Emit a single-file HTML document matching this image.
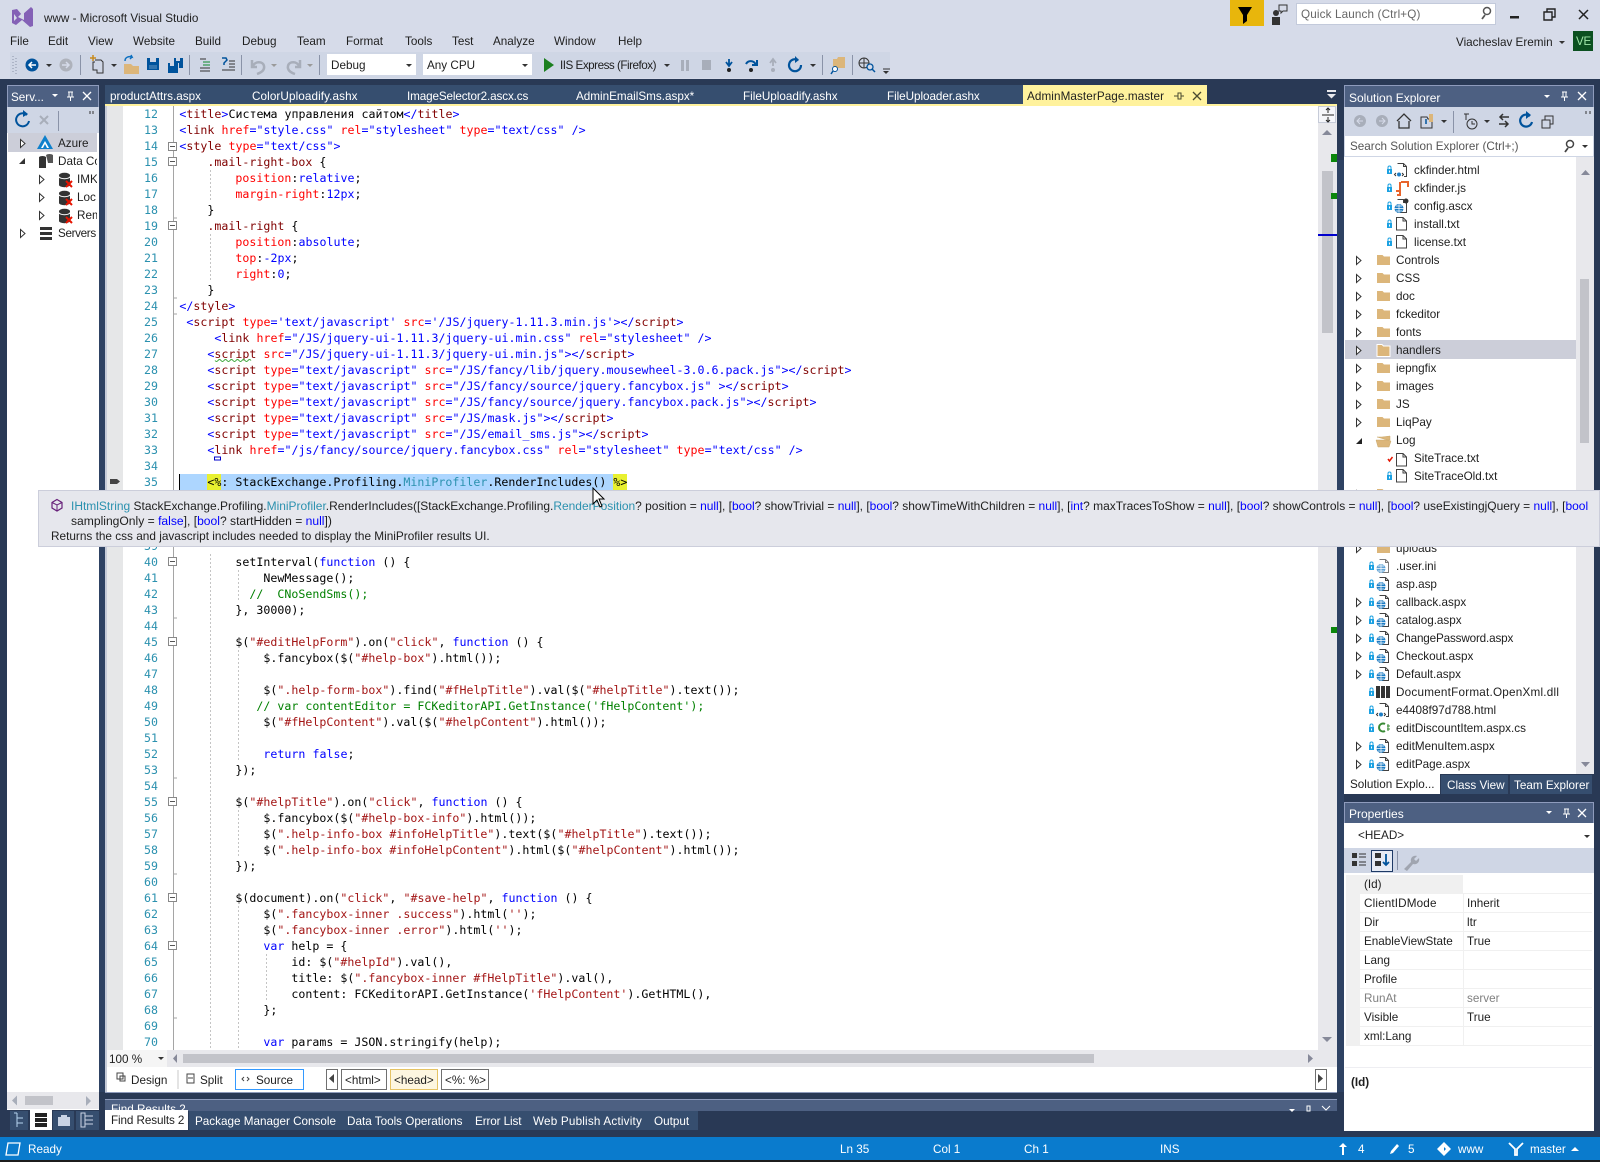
<!DOCTYPE html>
<html><head><meta charset="utf-8"><title>www - Microsoft Visual Studio</title>
<style>
html,body{margin:0;padding:0;width:1600px;height:1162px;overflow:hidden;background:#293955}
body{position:relative;font:11.7px/16px "Liberation Sans",sans-serif;color:#1e1e1e}
.r0{position:absolute}
.x{position:absolute;white-space:pre;line-height:16px;margin-top:1px}
.w{color:#fff}
.l{position:absolute;left:179.4px;margin:0;white-space:pre;font:11.6px/16px "DejaVu Sans Mono","Liberation Mono",monospace;letter-spacing:.02px;color:#000}
.n{position:absolute;left:125px;width:33px;text-align:right;font:11.6px/16px "DejaVu Sans Mono",monospace;color:#2b91af}
i{font-style:normal}
i.b{color:#00f}i.m{color:#800000}i.r{color:#f00}i.s{color:#a31515}i.g{color:#008000}i.t{color:#2b91af}
</style></head><body>
<!-- chrome -->
<div class="r0" style="left:0;top:0;width:1600px;height:79px;background:#d6dbe9"></div>
<div class="r0" style="left:10px;top:52px;width:880px;height:26px;background:#cfd6e5"></div>
<div class="r0" style="left:1230px;top:0;width:34px;height:26px;background:#e8b60c"></div>
<div class="r0" style="left:1296px;top:3px;width:198px;height:20px;background:#fff;border:1px solid #c3cadb"></div>
<div class="r0" style="left:1573px;top:31px;width:20px;height:20px;background:#0b5020"></div>
<div class="r0" style="left:327px;top:54px;width:89px;height:21px;background:#fff"></div>
<div class="r0" style="left:423px;top:54px;width:109px;height:21px;background:#fff"></div>
<div class="r0" style="left:99px;top:160px;width:6px;height:932px;background:#2e4263"></div>
<div class="r0" style="left:1337px;top:160px;width:7px;height:932px;background:#2e4263"></div>

<span class="x" style="left:44px;top:10px">www - Microsoft Visual Studio</span>
<span class="x" style="left:10px;top:33px">File</span><span class="x" style="left:48px;top:33px">Edit</span><span class="x" style="left:88px;top:33px">View</span><span class="x" style="left:133px;top:33px">Website</span><span class="x" style="left:195px;top:33px">Build</span><span class="x" style="left:242px;top:33px">Debug</span><span class="x" style="left:297px;top:33px">Team</span><span class="x" style="left:346px;top:33px">Format</span><span class="x" style="left:405px;top:33px">Tools</span><span class="x" style="left:452px;top:33px">Test</span><span class="x" style="left:493px;top:33px">Analyze</span><span class="x" style="left:554px;top:33px">Window</span><span class="x" style="left:618px;top:33px">Help</span>
<span class="x" style="left:331px;top:57px">Debug</span><span class="x" style="left:427px;top:57px">Any CPU</span><span class="x" style="left:560px;top:57px;letter-spacing:-.5px">IIS Express (Firefox)</span>
<span class="x" style="left:1301px;top:6px;color:#666;letter-spacing:.14px">Quick Launch (Ctrl+Q)</span>
<span class="x" style="left:1456px;top:34px">Viacheslav Eremin</span>
<span class="x" style="left:1576px;top:33px;color:#9fe6a8;font-size:11.5px;letter-spacing:-.2px">VE</span>

<!-- left panel -->
<div class="r0" style="left:7px;top:85px;width:90px;height:21px;background:#4d6082;border:1px solid #8e9bbc;border-bottom:0"></div>
<div class="r0" style="left:7px;top:107px;width:92px;height:26px;background:#cfd6e5"></div>
<div class="r0" style="left:7px;top:133px;width:92px;height:977px;background:#fff"></div>
<div class="r0" style="left:8px;top:133px;width:89px;height:19px;background:#ccced9"></div>
<div class="r0" style="left:7px;top:1092px;width:92px;height:17px;background:#e8e8ec"></div>
<div class="r0" style="left:25px;top:1096px;width:28px;height:9px;background:#c2c3c9"></div>
<span class="x w" style="left:11px;top:89px">Serv...</span>
<span class="x" style="left:58px;top:135px">Azure</span>
<span class="x" style="left:58px;top:153px;width:39px;overflow:hidden">Data Connections</span>
<span class="x" style="left:77px;top:171px;width:20px;overflow:hidden">IMKdb</span>
<span class="x" style="left:77px;top:189px;width:19px;overflow:hidden">Local</span>
<span class="x" style="left:77px;top:207px;width:20px;overflow:hidden">Remote</span>
<span class="x" style="left:58px;top:225px;width:40px;overflow:hidden;letter-spacing:-.35px">Servers</span>
<div class="r0" style="left:10px;top:1111px;width:18px;height:19px;background:#364e6f"></div>
<div class="r0" style="left:30px;top:1110px;width:22px;height:20px;background:#fff"></div>
<div class="r0" style="left:53px;top:1111px;width:21px;height:19px;background:#364e6f"></div>
<div class="r0" style="left:76px;top:1111px;width:23px;height:19px;background:#364e6f"></div>

<!-- tabs -->
<div class="r0" style="left:105px;top:85px;width:919px;height:19px;background:#364e6f"></div>
<div class="r0" style="left:1023px;top:85px;width:184px;height:20px;background:#fff29d"></div>
<div class="r0" style="left:105px;top:104px;width:1232px;height:2px;background:#fff29d"></div>
<span class="x w" style="left:110px;top:88px">productAttrs.aspx</span><span class="x w" style="left:252px;top:88px;letter-spacing:.1px">ColorUploadify.ashx</span><span class="x w" style="left:407px;top:88px;letter-spacing:-.13px">ImageSelector2.ascx.cs</span><span class="x w" style="left:576px;top:88px">AdminEmailSms.aspx*</span><span class="x w" style="left:743px;top:88px">FileUploadify.ashx</span><span class="x w" style="left:887px;top:88px;letter-spacing:-.05px">FileUploader.ashx</span>
<span class="x" style="left:1027px;top:88px;letter-spacing:.09px">AdminMasterPage.master</span>

<!-- editor -->
<div class="r0" style="left:105px;top:106px;width:1232px;height:986px;background:#fff"></div>
<div class="r0" style="left:105px;top:106px;width:2px;height:986px;background:#c6cbd8"></div>
<div class="r0" style="left:107px;top:106px;width:16px;height:944px;background:#e6e7e8"></div>
<div class="r0" style="left:1318px;top:106px;width:19px;height:944px;background:#e8e8ec"></div>
<div class="r0" style="left:1318px;top:106px;width:18px;height:17px;background:#f5f6fa;border:1px solid #c6cbd8;box-sizing:border-box"></div>
<div class="r0" style="left:1322px;top:171px;width:11px;height:162px;background:#c2c3c9"></div>
<div class="r0" style="left:1331px;top:154px;width:6px;height:8px;background:#0b860b"></div>
<div class="r0" style="left:1331px;top:193px;width:6px;height:6px;background:#0b860b"></div>
<div class="r0" style="left:1331px;top:627px;width:6px;height:6px;background:#0b860b"></div>
<div class="r0" style="left:1318px;top:234px;width:19px;height:2px;background:#0000cd"></div>
<div class="r0" style="left:107px;top:1050px;width:1230px;height:17px;background:#e8e8ec"></div>
<div class="r0" style="left:107px;top:1050px;width:60px;height:17px;background:#f5f5f5"></div>
<div class="r0" style="left:183px;top:1054px;width:911px;height:9px;background:#c2c3c9"></div>
<span class="x" style="left:109px;top:1051px">100 %</span>
<div class="r0" style="left:105px;top:1092px;width:1232px;height:1px;background:#8e9bbc"></div>
<div class="r0" style="left:235px;top:1069px;width:67px;height:19px;border:1px solid #3399ff"></div>
<div class="r0" style="left:326px;top:1069px;width:10px;height:19px;border:1px solid #707070"></div>
<div class="r0" style="left:341px;top:1069px;width:44px;height:19px;border:1px solid #707070"></div>
<div class="r0" style="left:390px;top:1069px;width:46px;height:19px;border:1px solid #e5c365;background:#fdf6e0"></div>
<div class="r0" style="left:441px;top:1069px;width:46px;height:19px;border:1px solid #707070"></div>
<div class="r0" style="left:1315px;top:1069px;width:10px;height:19px;border:1px solid #707070"></div>
<span class="x" style="left:131px;top:1072px">Design</span><span class="x" style="left:200px;top:1072px">Split</span><span class="x" style="left:256px;top:1072px">Source</span>
<span class="x" style="left:345px;top:1072px">&lt;html&gt;</span><span class="x" style="left:394px;top:1072px">&lt;head&gt;</span><span class="x" style="left:445px;top:1072px">&lt;%: %&gt;</span>

<!-- line numbers -->
<span class="n" style="top:106px">12</span><span class="n" style="top:122px">13</span><span class="n" style="top:138px">14</span><span class="n" style="top:154px">15</span><span class="n" style="top:170px">16</span><span class="n" style="top:186px">17</span><span class="n" style="top:202px">18</span><span class="n" style="top:218px">19</span><span class="n" style="top:234px">20</span><span class="n" style="top:250px">21</span><span class="n" style="top:266px">22</span><span class="n" style="top:282px">23</span><span class="n" style="top:298px">24</span><span class="n" style="top:314px">25</span><span class="n" style="top:330px">26</span><span class="n" style="top:346px">27</span><span class="n" style="top:362px">28</span><span class="n" style="top:378px">29</span><span class="n" style="top:394px">30</span><span class="n" style="top:410px">31</span><span class="n" style="top:426px">32</span><span class="n" style="top:442px">33</span><span class="n" style="top:458px">34</span><span class="n" style="top:474px">35</span><span class="n" style="top:538px">39</span><span class="n" style="top:554px">40</span><span class="n" style="top:570px">41</span><span class="n" style="top:586px">42</span><span class="n" style="top:602px">43</span><span class="n" style="top:618px">44</span><span class="n" style="top:634px">45</span><span class="n" style="top:650px">46</span><span class="n" style="top:666px">47</span><span class="n" style="top:682px">48</span><span class="n" style="top:698px">49</span><span class="n" style="top:714px">50</span><span class="n" style="top:730px">51</span><span class="n" style="top:746px">52</span><span class="n" style="top:762px">53</span><span class="n" style="top:778px">54</span><span class="n" style="top:794px">55</span><span class="n" style="top:810px">56</span><span class="n" style="top:826px">57</span><span class="n" style="top:842px">58</span><span class="n" style="top:858px">59</span><span class="n" style="top:874px">60</span><span class="n" style="top:890px">61</span><span class="n" style="top:906px">62</span><span class="n" style="top:922px">63</span><span class="n" style="top:938px">64</span><span class="n" style="top:954px">65</span><span class="n" style="top:970px">66</span><span class="n" style="top:986px">67</span><span class="n" style="top:1002px">68</span><span class="n" style="top:1018px">69</span><span class="n" style="top:1034px">70</span>

<!-- line 35 highlight -->
<div class="r0" style="left:180px;top:474px;width:447px;height:16px;background:#add6ff"></div>
<div class="r0" style="left:207px;top:474px;width:14px;height:16px;background:#e8f030"></div>
<div class="r0" style="left:613px;top:474px;width:14px;height:16px;background:#e8f030"></div>
<div class="r0" style="left:179px;top:474px;width:1px;height:16px;background:#000"></div>

<!-- code -->
<pre class="l" style="top:106px"><i class="b">&lt;</i><i class="m">title</i><i class="b">&gt;</i>Система управления сайтом<i class="b">&lt;/</i><i class="m">title</i><i class="b">&gt;</i></pre>
<pre class="l" style="top:122px"><i class="b">&lt;</i><i class="m">link</i> <i class="r">href</i><i class="b">="style.css"</i> <i class="r">rel</i><i class="b">="stylesheet"</i> <i class="r">type</i><i class="b">="text/css"</i> <i class="b">/&gt;</i></pre>
<pre class="l" style="top:138px"><i class="b">&lt;</i><i class="m">style</i> <i class="r">type</i><i class="b">="text/css"&gt;</i></pre>
<pre class="l" style="top:154px">    <i class="m">.mail-right-box</i> {</pre>
<pre class="l" style="top:170px">        <i class="r">position</i>:<i class="b">relative</i>;</pre>
<pre class="l" style="top:186px">        <i class="r">margin-right</i>:<i class="b">12px</i>;</pre>
<pre class="l" style="top:202px">    }</pre>
<pre class="l" style="top:218px">    <i class="m">.mail-right</i> {</pre>
<pre class="l" style="top:234px">        <i class="r">position</i>:<i class="b">absolute</i>;</pre>
<pre class="l" style="top:250px">        <i class="r">top</i>:<i class="b">-2px</i>;</pre>
<pre class="l" style="top:266px">        <i class="r">right</i>:<i class="b">0</i>;</pre>
<pre class="l" style="top:282px">    }</pre>
<pre class="l" style="top:298px"><i class="b">&lt;/</i><i class="m">style</i><i class="b">&gt;</i></pre>
<pre class="l" style="top:314px"> <i class="b">&lt;</i><i class="m">script</i> <i class="r">type</i><i class="b">='text/javascript'</i> <i class="r">src</i><i class="b">='/JS/jquery-1.11.3.min.js'&gt;&lt;/</i><i class="m">script</i><i class="b">&gt;</i></pre>
<pre class="l" style="top:330px">     <i class="b">&lt;</i><i class="m">link</i> <i class="r">href</i><i class="b">="/JS/jquery-ui-1.11.3/jquery-ui.min.css"</i> <i class="r">rel</i><i class="b">="stylesheet"</i> <i class="b">/&gt;</i></pre>
<pre class="l" style="top:346px">    <i class="b">&lt;</i><i class="m">script</i> <i class="r">src</i><i class="b">="/JS/jquery-ui-1.11.3/jquery-ui.min.js"&gt;&lt;/</i><i class="m">script</i><i class="b">&gt;</i></pre>
<pre class="l" style="top:362px">    <i class="b">&lt;</i><i class="m">script</i> <i class="r">type</i><i class="b">="text/javascript"</i> <i class="r">src</i><i class="b">="/JS/fancy/lib/jquery.mousewheel-3.0.6.pack.js"&gt;&lt;/</i><i class="m">script</i><i class="b">&gt;</i></pre>
<pre class="l" style="top:378px">    <i class="b">&lt;</i><i class="m">script</i> <i class="r">type</i><i class="b">="text/javascript"</i> <i class="r">src</i><i class="b">="/JS/fancy/source/jquery.fancybox.js"</i> <i class="b">&gt;&lt;/</i><i class="m">script</i><i class="b">&gt;</i></pre>
<pre class="l" style="top:394px">    <i class="b">&lt;</i><i class="m">script</i> <i class="r">type</i><i class="b">="text/javascript"</i> <i class="r">src</i><i class="b">="/JS/fancy/source/jquery.fancybox.pack.js"&gt;&lt;/</i><i class="m">script</i><i class="b">&gt;</i></pre>
<pre class="l" style="top:410px">    <i class="b">&lt;</i><i class="m">script</i> <i class="r">type</i><i class="b">="text/javascript"</i> <i class="r">src</i><i class="b">="/JS/mask.js"&gt;&lt;/</i><i class="m">script</i><i class="b">&gt;</i></pre>
<pre class="l" style="top:426px">    <i class="b">&lt;</i><i class="m">script</i> <i class="r">type</i><i class="b">="text/javascript"</i> <i class="r">src</i><i class="b">="/JS/email_sms.js"&gt;&lt;/</i><i class="m">script</i><i class="b">&gt;</i></pre>
<pre class="l" style="top:442px">    <i class="b">&lt;</i><i class="m">link</i> <i class="r">href</i><i class="b">="/js/fancy/source/jquery.fancybox.css"</i> <i class="r">rel</i><i class="b">="stylesheet"</i> <i class="r">type</i><i class="b">="text/css"</i> <i class="b">/&gt;</i></pre>
<pre class="l" style="top:474px">    &lt;%: StackExchange.Profiling.<i class="t">MiniProfiler</i>.RenderIncludes() %&gt;</pre>
<pre class="l" style="top:554px">        setInterval(<i class="b">function</i> () {</pre>
<pre class="l" style="top:570px">            NewMessage();</pre>
<pre class="l" style="top:586px">          <i class="g">//  CNoSendSms();</i></pre>
<pre class="l" style="top:602px">        }, 30000);</pre>
<pre class="l" style="top:634px">        $(<i class="s">"#editHelpForm"</i>).on(<i class="s">"click"</i>, <i class="b">function</i> () {</pre>
<pre class="l" style="top:650px">            $.fancybox($(<i class="s">"#help-box"</i>).html());</pre>
<pre class="l" style="top:682px">            $(<i class="s">".help-form-box"</i>).find(<i class="s">"#fHelpTitle"</i>).val($(<i class="s">"#helpTitle"</i>).text());</pre>
<pre class="l" style="top:698px">           <i class="g">// var contentEditor = FCKeditorAPI.GetInstance('fHelpContent');</i></pre>
<pre class="l" style="top:714px">            $(<i class="s">"#fHelpContent"</i>).val($(<i class="s">"#helpContent"</i>).html());</pre>
<pre class="l" style="top:746px">            <i class="b">return</i> <i class="b">false</i>;</pre>
<pre class="l" style="top:762px">        });</pre>
<pre class="l" style="top:794px">        $(<i class="s">"#helpTitle"</i>).on(<i class="s">"click"</i>, <i class="b">function</i> () {</pre>
<pre class="l" style="top:810px">            $.fancybox($(<i class="s">"#help-box-info"</i>).html());</pre>
<pre class="l" style="top:826px">            $(<i class="s">".help-info-box #infoHelpTitle"</i>).text($(<i class="s">"#helpTitle"</i>).text());</pre>
<pre class="l" style="top:842px">            $(<i class="s">".help-info-box #infoHelpContent"</i>).html($(<i class="s">"#helpContent"</i>).html());</pre>
<pre class="l" style="top:858px">        });</pre>
<pre class="l" style="top:890px">        $(document).on(<i class="s">"click"</i>, <i class="s">"#save-help"</i>, <i class="b">function</i> () {</pre>
<pre class="l" style="top:906px">            $(<i class="s">".fancybox-inner .success"</i>).html(<i class="s">''</i>);</pre>
<pre class="l" style="top:922px">            $(<i class="s">".fancybox-inner .error"</i>).html(<i class="s">''</i>);</pre>
<pre class="l" style="top:938px">            <i class="b">var</i> help = {</pre>
<pre class="l" style="top:954px">                id: $(<i class="s">"#helpId"</i>).val(),</pre>
<pre class="l" style="top:970px">                title: $(<i class="s">".fancybox-inner #fHelpTitle"</i>).val(),</pre>
<pre class="l" style="top:986px">                content: FCKeditorAPI.GetInstance(<i class="s">'fHelpContent'</i>).GetHTML(),</pre>
<pre class="l" style="top:1002px">            };</pre>
<pre class="l" style="top:1034px">            <i class="b">var</i> params = JSON.stringify(help);</pre>

<!-- find results -->
<div class="r0" style="left:105px;top:1099px;width:1232px;height:12px;background:#4d6082;border-top:1px solid #8e9bbc;box-sizing:border-box;overflow:hidden"><span class="x w" style="left:6px;top:1px">Find Results 2</span></div>
<div class="r0" style="left:189px;top:1111px;width:509px;height:19px;background:#364e6f"></div>
<div class="r0" style="left:105px;top:1110px;width:83px;height:20px;background:#fff"></div>
<span class="x" style="left:111px;top:1112px;letter-spacing:-.1px">Find Results 2</span>
<span class="x w" style="left:195px;top:1113px">Package Manager Console</span><span class="x w" style="left:347px;top:1113px">Data Tools Operations</span><span class="x w" style="left:475px;top:1113px;letter-spacing:-.1px">Error List</span><span class="x w" style="left:533px;top:1113px;letter-spacing:.2px">Web Publish Activity</span><span class="x w" style="left:654px;top:1113px">Output</span>

<!-- solution explorer -->
<div class="r0" style="left:1344px;top:85px;width:248px;height:21px;background:#4d6082;border:1px solid #8e9bbc;border-bottom:0"></div>
<div class="r0" style="left:1344px;top:107px;width:250px;height:28px;background:#cfd6e5"></div>
<div class="r0" style="left:1344px;top:135px;width:250px;height:22px;background:#fff;border:1px solid #cfd6e5;box-sizing:border-box"></div>
<div class="r0" style="left:1344px;top:157px;width:250px;height:617px;background:#fff"></div>
<div class="r0" style="left:1576px;top:157px;width:18px;height:617px;background:#e8e8ec"></div>
<div class="r0" style="left:1580px;top:279px;width:9px;height:164px;background:#c2c3c9"></div>
<div class="r0" style="left:1345px;top:340px;width:231px;height:19px;background:#ccced9"></div>
<span class="x w" style="left:1349px;top:89px;font-size:12px">Solution Explorer</span>
<span class="x" style="left:1350px;top:138px;color:#555">Search Solution Explorer (Ctrl+;)</span>
<span class="x" style="left:1414px;top:162px">ckfinder.html</span><span class="x" style="left:1414px;top:180px">ckfinder.js</span><span class="x" style="left:1414px;top:198px">config.ascx</span><span class="x" style="left:1414px;top:216px">install.txt</span><span class="x" style="left:1414px;top:234px">license.txt</span>
<span class="x" style="left:1396px;top:252px">Controls</span><span class="x" style="left:1396px;top:270px">CSS</span><span class="x" style="left:1396px;top:288px">doc</span><span class="x" style="left:1396px;top:306px">fckeditor</span><span class="x" style="left:1396px;top:324px">fonts</span><span class="x" style="left:1396px;top:342px">handlers</span><span class="x" style="left:1396px;top:360px">iepngfix</span><span class="x" style="left:1396px;top:378px">images</span><span class="x" style="left:1396px;top:396px">JS</span><span class="x" style="left:1396px;top:414px">LiqPay</span><span class="x" style="left:1396px;top:432px">Log</span>
<span class="x" style="left:1414px;top:450px">SiteTrace.txt</span><span class="x" style="left:1414px;top:468px">SiteTraceOld.txt</span>
<span class="x" style="left:1396px;top:540px">uploads</span><span class="x" style="left:1396px;top:558px">.user.ini</span><span class="x" style="left:1396px;top:576px">asp.asp</span><span class="x" style="left:1396px;top:594px">callback.aspx</span><span class="x" style="left:1396px;top:612px">catalog.aspx</span><span class="x" style="left:1396px;top:630px;letter-spacing:-.16px">ChangePassword.aspx</span><span class="x" style="left:1396px;top:648px">Checkout.aspx</span><span class="x" style="left:1396px;top:666px">Default.aspx</span><span class="x" style="left:1396px;top:684px;letter-spacing:.23px">DocumentFormat.OpenXml.dll</span><span class="x" style="left:1396px;top:702px">e4408f97d788.html</span><span class="x" style="left:1396px;top:720px">editDiscountItem.aspx.cs</span><span class="x" style="left:1396px;top:738px">editMenuItem.aspx</span><span class="x" style="left:1396px;top:756px">editPage.aspx</span>
<div class="r0" style="left:1441px;top:775px;width:151px;height:19px;background:#364e6f"></div>
<div class="r0" style="left:1344px;top:774px;width:96px;height:20px;background:#fff"></div>
<div class="r0" style="left:1508px;top:775px;width:2px;height:19px;background:#293955"></div>
<span class="x" style="left:1350px;top:776px">Solution Explo...</span><span class="x w" style="left:1447px;top:777px">Class View</span><span class="x w" style="left:1514px;top:777px">Team Explorer</span>

<!-- properties -->
<div class="r0" style="left:1344px;top:802px;width:248px;height:20px;background:#4d6082;border:1px solid #8e9bbc;border-bottom:0"></div>
<div class="r0" style="left:1344px;top:823px;width:250px;height:308px;background:#fff"></div>
<div class="r0" style="left:1344px;top:848px;width:250px;height:25px;background:#cfd6e5"></div>
<div class="r0" style="left:1371px;top:850px;width:20px;height:20px;background:#e6ebf5;border:1px solid #1e3a66"></div>
<div class="r0" style="left:1346px;top:875px;width:14px;height:171px;background:#f0f0f0"></div>
<div class="r0" style="left:1360px;top:875px;width:103px;height:18px;background:#f0f0f0"></div>
<div class="r0" style="left:1360px;top:893px;width:232px;height:1px;background:#f0f0f0"></div>
<div class="r0" style="left:1360px;top:912px;width:232px;height:1px;background:#f0f0f0"></div>
<div class="r0" style="left:1360px;top:931px;width:232px;height:1px;background:#f0f0f0"></div>
<div class="r0" style="left:1360px;top:950px;width:232px;height:1px;background:#f0f0f0"></div>
<div class="r0" style="left:1360px;top:969px;width:232px;height:1px;background:#f0f0f0"></div>
<div class="r0" style="left:1360px;top:988px;width:232px;height:1px;background:#f0f0f0"></div>
<div class="r0" style="left:1360px;top:1007px;width:232px;height:1px;background:#f0f0f0"></div>
<div class="r0" style="left:1360px;top:1026px;width:232px;height:1px;background:#f0f0f0"></div>
<div class="r0" style="left:1360px;top:1045px;width:232px;height:1px;background:#f0f0f0"></div>
<div class="r0" style="left:1463px;top:893px;width:1px;height:153px;background:#f0f0f0"></div>
<div class="r0" style="left:1345px;top:1067px;width:247px;height:1px;background:#eeeef2"></div>
<span class="x w" style="left:1349px;top:805px;font-size:12px">Properties</span>
<span class="x" style="left:1358px;top:827px">&lt;HEAD&gt;</span>
<span class="x" style="left:1364px;top:876px;color:#222">(Id)</span>
<span class="x" style="left:1364px;top:895px;letter-spacing:.15px">ClientIDMode</span><span class="x" style="left:1467px;top:895px">Inherit</span>
<span class="x" style="left:1364px;top:914px">Dir</span><span class="x" style="left:1467px;top:914px">ltr</span>
<span class="x" style="left:1364px;top:933px">EnableViewState</span><span class="x" style="left:1467px;top:933px">True</span>
<span class="x" style="left:1364px;top:952px">Lang</span>
<span class="x" style="left:1364px;top:971px">Profile</span>
<span class="x" style="left:1364px;top:990px;color:#808080">RunAt</span><span class="x" style="left:1467px;top:990px;color:#808080">server</span>
<span class="x" style="left:1364px;top:1009px">Visible</span><span class="x" style="left:1467px;top:1009px">True</span>
<span class="x" style="left:1364px;top:1028px">xml:Lang</span>
<span class="x" style="left:1351px;top:1074px;font-weight:bold">(Id)</span>

<!-- status -->
<div class="r0" style="left:0;top:1137px;width:1600px;height:23px;background:#0a7bcd"></div>
<div class="r0" style="left:0;top:1160px;width:1600px;height:2px;background:#1c1c1c"></div>
<span class="x w" style="left:28px;top:1141px">Ready</span><span class="x w" style="left:840px;top:1141px">Ln 35</span><span class="x w" style="left:933px;top:1141px">Col 1</span><span class="x w" style="left:1024px;top:1141px">Ch 1</span><span class="x w" style="left:1160px;top:1141px">INS</span><span class="x w" style="left:1358px;top:1141px">4</span><span class="x w" style="left:1408px;top:1141px">5</span><span class="x w" style="left:1458px;top:1141px">www</span><span class="x w" style="left:1530px;top:1141px">master</span>

<!-- icons -->
<svg class="r0" style="left:0;top:0" width="1600" height="1162" viewBox="0 0 1600 1162" xmlns="http://www.w3.org/2000/svg">
<defs>
<g id="fo"><path d="M0 1h5.500l1.500 1.500H13V11H0z" fill="#dcb67a"/></g>
<g id="fi"><path d="M.5.5h6.500l3.500 3.500v9H.5z" fill="#fff" stroke="#424242"/><path d="M7 .5V4h3.500" fill="none" stroke="#424242"/></g>
<g id="lk"><rect x="0" y="3" width="5" height="5" fill="#1ba1e2"/><path d="M1 3V1.500a1.500 1.500 0 0 1 3 0V3" fill="none" stroke="#1ba1e2"/><rect x="2" y="4.500" width="1" height="2" fill="#fff"/></g>
<g id="gl"><path d="M3.500.5h6l3 3v10h-9" fill="#fff" stroke="#424242"/><path d="M9.500.5V3.500h3" fill="none" stroke="#424242"/><circle cx="5" cy="9.500" r="4.500" fill="#1c7cc4"/><path d="M.5 9.500h9M5 5v9M2 7h6M2 12h6" stroke="#fff" stroke-width=".7"/></g>
<g id="ht"><path d="M3.500.5h6l3 3v10h-9" fill="#fff" stroke="#424242"/><path d="M9.500.5V3.500h3" fill="none" stroke="#424242"/><rect x="0" y="9" width="10" height="5" fill="#fff"/><circle cx="5" cy="11.500" r="2" fill="#1c7cc4"/><path d="M2 10l-1.500 1.500L2 13M8 10l1.500 1.500L8 13" stroke="#333" fill="none"/></g>
<g id="ex"><path d="M.5.500l4.500 4-4.500 4z" fill="#fff" stroke="#333"/></g>
<g id="cb"><rect x=".5" y=".5" width="8" height="8" fill="#fff" stroke="#888"/><path d="M2 4.500h5" stroke="#555"/></g>
<g id="dd"><path d="M0 0h6L3 3z" fill="#333"/></g>
<g id="dg"><path d="M0 0h6L3 3z" fill="#9a9a9a"/></g>
<g id="cl"><path d="M0 0l8 8M8 0L0 8" stroke="#fff" stroke-width="1.300" fill="none"/></g>
<g id="pn"><path d="M2 1h5M3 1v5h3V1M1 6h7M4.500 6v4" stroke="#fff" fill="none"/></g>
<g id="db"><path d="M1 3a5 2 0 0 1 11 0v10a5 2 0 0 1-11 0z" fill="#333"/><path d="M1 4.500a5 2 0 0 0 11 0" stroke="#fff" fill="none"/><path d="M8 9l6 6M14 9l-6 6" stroke="#e51400" stroke-width="2"/></g>
</defs>

<!-- logo and title icons -->
<path d="M12 10l5-1 5 6 9-8 2 2v17l-3 1-8-7-6 5-4-2z" fill="#8461b6"/><path d="M18 17l6 3v-9z M14 14v7l3-3z" fill="#d6dbe9"/>
<path d="M1238 7h14l-5 8v6l-4 3v-9z" fill="#000"/>
<circle cx="1276" cy="13" r="3" fill="#333"/><path d="M1272 17h8v8h-8z" fill="#333"/><path d="M1279 5h8v6h-4l-2 2v-2h-2z" fill="none" stroke="#333"/>
<circle cx="1487" cy="11" r="3.500" fill="none" stroke="#555" stroke-width="1.500"/><path d="M1485 15l-3 4" stroke="#555" stroke-width="1.800"/>
<rect x="1510" y="16" width="9" height="2.500" fill="#222"/>
<path d="M1544 12h8v8h-8zM1547 12V9h8v8h-3" fill="none" stroke="#222" stroke-width="1.400"/>
<path d="M1579 10l9 9M1588 10l-9 9" stroke="#222" stroke-width="1.500"/>
<use href="#dd" x="1559" y="41"/>
<!-- toolbar -->
<path d="M13 56v18M16 58v16" stroke="#8a93a8" stroke-dasharray="1 2" fill="none"/>
<circle cx="32" cy="65" r="6.500" fill="#00539c"/><path d="M36 65h-6M32 62l-3 3 3 3" stroke="#fff" stroke-width="1.500" fill="none"/><use href="#dd" x="46" y="64"/>
<circle cx="66" cy="65" r="6.500" fill="#aeb2bb"/><path d="M62 65h6M66 62l3 3-3 3" stroke="#d6dbe9" stroke-width="1.500" fill="none"/>
<path d="M80.500 55v20M189.500 55v20M241.500 55v20M319.500 55v20M822.500 55v20M852.500 55v20" stroke="#8a93a8"/>
<path d="M95 60h6l2 2v11h-6v-3h-4v-8h2" fill="none" stroke="#333"/><path d="M93 55v6M90 58h6" stroke="#c88a1c" stroke-width="1.500"/><use href="#dd" x="111" y="64"/>
<path d="M124 64h7l2 2h6v8h-15z" fill="#dcb67a"/><path d="M125 61c0-4 4-5 7-4l-1-2M132 57l-2 2" stroke="#0e70c0" stroke-width="1.500" fill="none"/>
<path d="M147 58h12v12h-12z" fill="#00539c"/><rect x="150" y="58" width="6" height="4" fill="#cfd6e5"/><rect x="149" y="65" width="8" height="4" fill="#fff" opacity=".2"/>
<path d="M168 63h10v10h-10z" fill="#00539c"/><path d="M174 58h9v10h-4v-5h-5z" fill="#00539c"/><rect x="176" y="58" width="4" height="3" fill="#cfd6e5"/><rect x="170" y="63" width="4" height="3" fill="#cfd6e5"/>
<path d="M200 59h6M200 68h10M200 71h10" stroke="#333"/><path d="M203 62h7M203 65h7" stroke="#0e8a2a"/>
<path d="M222 58h4l1 2-3 3v2" stroke="#00539c" stroke-width="1.500" fill="none"/><path d="M229 61h6M229 64h6M229 67h6M222 70h13" stroke="#333"/>
<path d="M252 60v7h5M253 66c2-5 10-5 11 0s-4 7-7 8" stroke="#a8aeba" stroke-width="2.500" fill="none"/><use href="#dg" x="271" y="64"/>
<path d="M300 60v7h-5M299 66c-2-5-10-5-11 0s4 7 7 8" stroke="#a8aeba" stroke-width="2.500" fill="none"/><use href="#dg" x="307" y="64"/>
<use href="#dd" x="406" y="64"/><use href="#dd" x="522" y="64"/>
<path d="M544 58l10 7-10 7z" fill="#1b7f1f"/><use href="#dd" x="664" y="64"/>
<path d="M681 60h3v11h-3zM686 60h3v11h-3z" fill="#a8aeba"/><rect x="702" y="60" width="9" height="10" fill="#a8aeba"/>
<path d="M729 59v6M726 62l3 4 3-4" stroke="#00539c" stroke-width="1.800" fill="none"/><circle cx="729" cy="70" r="2" fill="#222"/>
<path d="M746 64c2-4 8-4 10 1M757 60v5h-5" stroke="#00539c" stroke-width="2" fill="none"/><circle cx="751" cy="70" r="2" fill="#222"/>
<path d="M773 66v-6M770 63l3-4 3 4" stroke="#a8aeba" stroke-width="1.800" fill="none"/><circle cx="773" cy="70" r="2" fill="#a8aeba"/>
<path d="M798 60a6 6 0 1 0 3 5" stroke="#00539c" stroke-width="2.200" fill="none"/><path d="M795 56v7l4-3z" fill="#00539c"/><use href="#dd" x="810" y="64"/>
<path d="M833 59h4l1-2h7v11h-12z" fill="#dcb67a"/><circle cx="835" cy="69" r="2.500" fill="#fff" stroke="#00539c"/><path d="M833 71l-2 3" stroke="#00539c" stroke-width="1.500"/>
<circle cx="864" cy="63" r="5" fill="none" stroke="#333"/><path d="M859 63h10M864 58v10" stroke="#333"/><circle cx="870" cy="67" r="3" fill="#d6dbe9" stroke="#00539c" stroke-width="1.300"/><path d="M872 69l3 3" stroke="#00539c" stroke-width="1.500"/>
<path d="M883 69h7" stroke="#333"/><use href="#dd" x="883" y="71"/>
<!-- left panel icons -->
<use href="#dg" x="52" y="94" style="filter:brightness(2)"/><use href="#pn" x="66" y="91"/><use href="#cl" x="83" y="92"/>
<path d="M27 115a6.500 6.500 0 1 0 2 6" stroke="#00539c" stroke-width="2" fill="none"/><path d="M23 110v7l5-3z" fill="#00539c"/>
<path d="M40 116l8 8M48 116l-8 8" stroke="#a8aeba" stroke-width="2"/><path d="M58.500 111v20" stroke="#8a93a8"/>
<path d="M90 111v3M93 111v3" stroke="#333"/>
<use href="#ex" x="20" y="139"/><path d="M45 135l8 14H37z" fill="#0e80cc"/><path d="M45 141l4 7h-8z" fill="#fff"/><path d="M45 144l2 4h-4z" fill="#0e80cc"/>
<path d="M19 164h6v-6z" fill="#333"/><path d="M39 157a4 2 0 0 1 7 0v11h-7z" fill="#333"/><path d="M46 155a4 2 0 0 1 7 0v8h-5" fill="#555"/>
<use href="#ex" x="39" y="175"/><use href="#db" x="58" y="172"/>
<use href="#ex" x="39" y="193"/><use href="#db" x="58" y="190"/>
<use href="#ex" x="39" y="211"/><use href="#db" x="58" y="208"/>
<use href="#ex" x="20" y="229"/><path d="M40 227h12v3H40zM40 232h12v3H40zM40 237h12v3H40z" fill="#333"/>
<path d="M15 1096l-5 5 5 5z" transform="translate(2 -.5)" fill="#a8aeba"/><path d="M86 1096l5 5-5 5z" fill="#a8aeba"/>
<path d="M14 1113h3M17 1113v14M17 1118h6M17 1123h6" stroke="#b5d4ef" fill="none"/>
<path d="M35 1113h12v4H35zM35 1118h12v4H35zM35 1123h12v4H35z" fill="#222"/>
<path d="M58 1117h12v9H58zM61 1117v-2h6v2" fill="#c9d3e4"/>
<path d="M81 1113h4v14h-4zM88 1116h5M88 1120h5M88 1124h5M85 1116h3M85 1120h3M85 1124h3" stroke="#c9d3e4" fill="none"/>
<!-- tabs -->
<path d="M1174 96h4M1178 93v6h3v-6zM1181 96h3" stroke="#4a4a30" fill="none"/><path d="M1193 92l8 8M1201 92l-8 8" stroke="#4a4a30" stroke-width="1.300"/>
<path d="M1327 90h9v2h-9z" fill="#e8e8ec"/><path d="M1327 94h9l-4.500 4.500z" fill="#e8e8ec"/>
<!-- editor glyphs -->
<path d="M1322 115h12" stroke="#222"/><path d="M1328 108v5M1326 110l2-2 2 2M1328 122v-5M1326 120l2 2 2-2" stroke="#222" fill="none"/>
<path d="M1322 135l5-5 5 5z" fill="#868999"/><path d="M1322 1037l5 5 5-5z" fill="#868999"/>
<path d="M110 479h7l3 2.500-3 2.500h-7z" fill="#444"/>
<path d="M173.500 106v944" stroke="#a5a5a5"/>
<path d="M174 218h3M174 298h3M174 314h3M174 618h3M174 778h3M174 874h3M174 1018h3" stroke="#a5a5a5"/>
<g stroke="#c4c4c4" stroke-dasharray="2 2" fill="none"><path d="M210.500 170v32M210.500 234v48M210.500 554v496M238.500 570v32M238.500 650v112M238.500 810v48M238.500 906v144M266.500 954v48"/></g>
<use href="#cb" x="168" y="142"/><use href="#cb" x="168" y="157"/><use href="#cb" x="168" y="221"/><use href="#cb" x="168" y="557"/><use href="#cb" x="168" y="637"/><use href="#cb" x="168" y="797"/><use href="#cb" x="168" y="893"/><use href="#cb" x="168" y="941"/>
<path d="M215 360.500q1.500 2 3 0t3 0 3 0 3 0 3 0 3 0 3 0 3 0 3 0 3 0 3 0 3 0" stroke="#3aa83a" fill="none" stroke-width="1"/>
<rect x="214.500" y="457" width="6" height="3" fill="none" stroke="#00c"/>
<path d="M158 1057h6l-3 3z" fill="#333"/><path d="M177 1054l-4 4.500 4 4.500z" fill="#868999"/><path d="M1308 1054l5 4.500-5 4.500z" fill="#868999"/>
<!-- design bar -->
<path d="M117 1073h6v6h-6zM120 1076h5v5h-5z" fill="none" stroke="#444"/><path d="M178 1070v19" stroke="#c8c8c8"/>
<path d="M187 1074h7v9h-7zM188 1078h5" stroke="#444" fill="none"/><path d="M244 1077l-2 2 2 2M247 1077l2 2-2 2" stroke="#444" fill="none"/>
<path d="M334 1074l-5 4.500 5 4.500z" fill="#444"/><path d="M1318 1074l5 4.500-5 4.500z" fill="#444"/>
<!-- find results controls -->
<use href="#dd" x="1289" y="1109" style="filter:brightness(5)"/><path d="M1307 1106h3v5h-3z" fill="none" stroke="#fff"/><path d="M1322 1106l4 4 4-4" stroke="#fff" fill="none"/>
<!-- solution explorer toolbar -->
<use href="#dg" x="1544" y="95" style="filter:brightness(2)"/><use href="#pn" x="1560" y="91"/><use href="#cl" x="1578" y="92"/>
<circle cx="1360" cy="121" r="6" fill="#a8aeba"/><path d="M1363 121h-6M1360 118l-3 3 3 3" stroke="#d6dbe9" fill="none"/>
<circle cx="1382" cy="121" r="6" fill="#a8aeba"/><path d="M1379 121h6M1382 118l3 3-3 3" stroke="#d6dbe9" fill="none"/>
<path d="M1397 121l7-7 7 7M1399 121v7h10v-7" stroke="#333" fill="none" stroke-width="1.300"/>
<path d="M1421 117h6l1 2h4v9h-11z" fill="none" stroke="#333"/><path d="M1429 114h4v8h-4z" fill="#dcb67a"/><path d="M1426 119v5" stroke="#00539c" stroke-width="1.500"/><use href="#dd" x="1441" y="120"/>
<path d="M1453.500 111v22" stroke="#8a93a8"/>
<circle cx="1472" cy="124" r="5" fill="none" stroke="#333"/><path d="M1472 121v3h3M1464 114h5M1466 114v6" stroke="#333" fill="none"/><use href="#dd" x="1484" y="120"/>
<path d="M1509 117h-9M1503 114l-3 3 3 3M1499 124h9M1505 121l3 3-3 3" stroke="#333" stroke-width="1.500" fill="none"/>
<path d="M1530 116a6 6 0 1 0 2 6" stroke="#00539c" stroke-width="2.200" fill="none"/><path d="M1526 111v8l5-4z" fill="#00539c"/>
<path d="M1542 120h8v8h-8zM1545 120v-4h8v8h-3" fill="none" stroke="#333"/>
<path d="M1586 111v3M1590 111v3" stroke="#333"/>
<circle cx="1570" cy="144" r="3.500" fill="none" stroke="#444" stroke-width="1.500"/><path d="M1568 148l-3 4" stroke="#444" stroke-width="1.800"/><use href="#dd" x="1582" y="145"/>
<!-- tree -->
<path d="M1581 175l4.500-5 4.500 5z" fill="#868999"/><path d="M1581 762l4.500 5 4.500-5z" fill="#868999"/>
<use href="#lk" x="1387" y="166"/><use href="#ht" x="1394" y="163"/>
<use href="#lk" x="1387" y="184"/><path d="M1401 182h7v5M1400 182v13h-3M1396 191h3" stroke="#e8642c" stroke-width="2" fill="none"/>
<use href="#lk" x="1387" y="202"/><use href="#gl" x="1394" y="199"/><circle cx="1406" cy="201" r="2.500" fill="#333"/>
<use href="#lk" x="1387" y="220"/><use href="#fi" x="1396" y="217"/>
<use href="#lk" x="1387" y="238"/><use href="#fi" x="1396" y="235"/>
<use href="#ex" x="1356" y="256"/><use href="#fo" x="1377" y="254"/>
<use href="#ex" x="1356" y="274"/><use href="#fo" x="1377" y="272"/>
<use href="#ex" x="1356" y="292"/><use href="#fo" x="1377" y="290"/>
<use href="#ex" x="1356" y="310"/><use href="#fo" x="1377" y="308"/>
<use href="#ex" x="1356" y="328"/><use href="#fo" x="1377" y="326"/>
<use href="#ex" x="1356" y="346"/><path d="M1377 344.500h5l1.500 1.500h6.500v10.500h-13z" fill="#dcb67a" stroke="#fff"/>
<use href="#ex" x="1356" y="364"/><use href="#fo" x="1377" y="362"/>
<use href="#ex" x="1356" y="382"/><use href="#fo" x="1377" y="380"/>
<use href="#ex" x="1356" y="400"/><use href="#fo" x="1377" y="398"/>
<use href="#ex" x="1356" y="418"/><use href="#fo" x="1377" y="416"/>
<path d="M1356 444h6v-6z" fill="#222"/><path d="M1377 437h5l8-1v4h-13l-1 0 2 7h11l2-6z" fill="#dcb67a" stroke="#c9a86a" stroke-width=".5"/>
<path d="M1388 459l1.500 2 3-4" stroke="#e51400" stroke-width="1.500" fill="none"/><use href="#fi" x="1396" y="453"/>
<use href="#lk" x="1387" y="472"/><use href="#fi" x="1396" y="469"/>
<use href="#ex" x="1356" y="490"/><use href="#fo" x="1377" y="488"/>
<use href="#ex" x="1356" y="544"/><use href="#fo" x="1377" y="542"/>
<use href="#lk" x="1369" y="562"/><use href="#gl" x="1376" y="559" opacity=".7"/>
<use href="#lk" x="1369" y="580"/><use href="#gl" x="1376" y="577"/>
<use href="#ex" x="1356" y="598"/><use href="#lk" x="1369" y="598"/><use href="#gl" x="1376" y="595"/>
<use href="#ex" x="1356" y="616"/><use href="#lk" x="1369" y="616"/><use href="#gl" x="1376" y="613"/>
<use href="#ex" x="1356" y="634"/><use href="#lk" x="1369" y="634"/><use href="#gl" x="1376" y="631"/>
<use href="#ex" x="1356" y="652"/><use href="#lk" x="1369" y="652"/><use href="#gl" x="1376" y="649"/>
<use href="#ex" x="1356" y="670"/><use href="#lk" x="1369" y="670"/><use href="#gl" x="1376" y="667"/>
<use href="#lk" x="1369" y="688"/><path d="M1376 686h4v12h-4zM1381 686h4v12h-4zM1386 686h4v12h-4z" fill="#333"/>
<use href="#lk" x="1369" y="706"/><use href="#ht" x="1376" y="703"/>
<use href="#lk" x="1369" y="724"/><path d="M1385 724a4 4 0 1 0 0 7" stroke="#388a34" stroke-width="2" fill="none"/><path d="M1387 726h3M1387 729h3M1388 724v7" stroke="#388a34"/>
<use href="#ex" x="1356" y="742"/><use href="#lk" x="1369" y="742"/><use href="#gl" x="1376" y="739"/>
<use href="#ex" x="1356" y="760"/><use href="#lk" x="1369" y="760"/><use href="#gl" x="1376" y="757"/>
<!-- properties icons -->
<use href="#dg" x="1546" y="811" style="filter:brightness(2)"/><use href="#pn" x="1562" y="808"/><use href="#cl" x="1578" y="809"/>
<use href="#dd" x="1584" y="835"/>
<path d="M1352 853h5v5h-5zM1352 861h5v5h-5z" fill="#333"/><path d="M1359 854h7M1359 857h7M1359 862h7M1359 865h7" stroke="#333"/>
<path d="M1375 853h6v5h-6zM1375 861h6v5h-6z" fill="#333"/><path d="M1386 854v11M1383 862l3 3 3-3" stroke="#00539c" stroke-width="1.800" fill="none"/>
<path d="M1397.500 851v19" stroke="#8a93a8"/>
<path d="M1404 869l7-7c-1-4 2-7 6-6l-3 3 2 2 3-3c1 4-2 7-6 6l-6 7z" fill="#a0a5b0"/>
<!-- status icons -->
<path d="M8 1143h12l-2 12H6z" fill="none" stroke="#fff" stroke-width="1.300"/>
<path d="M1343 1143l-4 4h3v8h2v-8h3z" fill="#fff"/>
<path d="M1390 1154l1-3 6-7 2 2-6 7z" fill="#fff"/>
<path d="M1444 1142l7 7-7 7-7-7z" fill="#fff"/><path d="M1444 1147l2 2-2 2z" fill="#0a7bcd"/>
<path d="M1509 1143l6 6v6h2v-6l6-6" stroke="#fff" stroke-width="1.800" fill="none"/>
<path d="M1571 1151l4-4 4 4z" fill="#fff"/>
</svg>

<!-- tooltip -->
<div class="r0" style="left:38px;top:490px;width:1562px;height:57px;background:#e6e7ed;border:1px solid #cccedb;box-sizing:border-box"></div>
<svg class="r0" style="left:50px;top:498px" width="14" height="14"><path d="M7 1.500l5 3v5.500l-5 3-5-3V4.500z" fill="none" stroke="#68217a" stroke-width="1.200"/><path d="M7 7V13M2 4.500l5 2.500 5-2.500" stroke="#68217a" fill="none"/></svg>
<span class="x" style="left:71px;top:497px;font-size:11.98px"><i class="t">IHtmlString</i> StackExchange.Profiling.<i class="t">MiniProfiler</i>.RenderIncludes([StackExchange.Profiling.<i class="t">RenderPosition</i>? position = <i class="b">null</i>], [<i class="b">bool</i>? showTrivial = <i class="b">null</i>], [<i class="b">bool</i>? showTimeWithChildren = <i class="b">null</i>], [<i class="b">int</i>? maxTracesToShow = <i class="b">null</i>], [<i class="b">bool</i>? showControls = <i class="b">null</i>], [<i class="b">bool</i>? useExistingjQuery = <i class="b">null</i>], [<i class="b">bool</i></span>
<span class="x" style="left:71px;top:512px;font-size:12.1px">samplingOnly = <i class="b">false</i>], [<i class="b">bool</i>? startHidden = <i class="b">null</i>])</span>
<span class="x" style="left:51px;top:527px;font-size:11.8px">Returns the css and javascript includes needed to display the MiniProfiler results UI.</span>
<svg class="r0" style="left:592px;top:487px" width="14" height="22"><path d="M1 1v16l4-4 3 7 2-1-3-7h5z" fill="#fff" stroke="#000"/></svg>
</body></html>
